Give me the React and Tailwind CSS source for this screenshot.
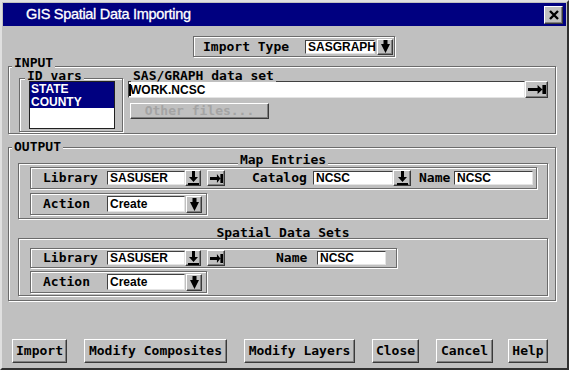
import React from 'react';

const monoBase = "font-['DejaVu_Sans_Mono',monospace] font-bold text-[13px]";
const mono = `${monoBase} text-black`;
const sans = "font-['Liberation_Sans',Arial,sans-serif] font-bold text-[12px]";
const raised = "border border-t-white border-l-white border-r-[#3a3a3a] border-b-[#3a3a3a] shadow-[inset_-1px_-1px_0_#808080] bg-[#c0c0c0]";
const sunken = "bg-white border border-t-[#404040] border-l-[#404040] border-r-[#e4e4e4] border-b-[#e4e4e4]";
const etched = "border border-[#6b6b6b] shadow-[inset_1px_1px_0_#fff,1px_1px_0_#fff]";

const DropIcon = () => (
    <svg width="9" height="13" viewBox="0 0 9 13">
        <path d="M2.5 0h4v4h2.5l-4.5 9L0 4h2.5z" fill="#000" />
    </svg>
);

const DownBar = () => (
    <svg width="11" height="14" viewBox="0 0 11 14">
        <path d="M4 0h3v6h3l-4.5 5L1 6h3z M0 12h11v2H0z" fill="#000" />
    </svg>
);

const ArrowBar = ({ w = 14 }) => (
    <svg width={w} height="9" viewBox="0 0 15 9" preserveAspectRatio="none">
        <path d="M0 3h8V0l4 4.5L8 9V6H0z M12 0h3v9h-3z" fill="#000" />
    </svg>
);

const Legend = ({ children, className }) => (
    <span className={`absolute bg-[#c0c0c0] px-[2px] h-[10px] leading-[10px] whitespace-nowrap ${mono} ${className}`}>
        {children}
    </span>
);

const Field = ({ value, w, h = 'h-[14px]' }) => (
    <div className={`${sunken} ${w} ${h} flex items-center pl-[2px] ${sans} text-black leading-none`}>{value}</div>
);

const IconBtn = ({ children, w = 'w-[16px]', h = 'h-[16px]', className = '' }) => (
    <div className={`${raised} ${w} ${h} flex items-center justify-center ${className}`}>{children}</div>
);

const ActionRow = ({ mt }) => (
    <div className={`${etched} ${mt} ml-[11px] w-[177px] h-[22px] flex items-center pl-[12px]`}>
        <span className={`${mono} w-[64px]`}>Action</span>
        <Field value="Create" w="w-[78px]" h="h-[16px]" />
        <IconBtn w="w-[16px]" h="h-[17px]" className="ml-[1px]">
            <DropIcon />
        </IconBtn>
    </div>
);

const LibPart = () => (
    <>
        <span className={`${mono} w-[64px]`}>Library</span>
        <Field value="SASUSER" w="w-[78px]" />
        <IconBtn>
            <DownBar />
        </IconBtn>
        <IconBtn w="w-[18px]" className="ml-[6px]">
            <ArrowBar w={13} />
        </IconBtn>
    </>
);

const App = () => {
    const buttons = [
        ['Import', 'w-[55px]', 'ml-[10px]'],
        ['Modify Composites', 'w-[143px]', 'ml-[17px]'],
        ['Modify Layers', 'w-[111px]', 'ml-[17px]'],
        ['Close', 'w-[47px]', 'ml-[17px]'],
        ['Cancel', 'w-[57px]', 'ml-[17px]'],
        ['Help', 'w-[40px]', 'ml-[15px]'],
    ];

    return (
        <div className="w-[569px] h-[370px] bg-[#c0c0c0] border-2 border-t-[#e0e0e0] border-l-[#e0e0e0] border-r-[#303030] border-b-[#303030] overflow-hidden">
            {/* title bar */}
            <div className="ml-[1px] mt-[1px] w-[563px] h-[23px] bg-[#000080] flex items-center">
                <span className="ml-[23px] text-white text-[14.5px] font-['Liberation_Sans',Arial,sans-serif] tracking-[-0.3px] [-webkit-text-stroke:0.3px_#fff]">
                    GIS Spatial Data Importing
                </span>
                <div className={`${raised} ml-auto mr-[3px] w-[19px] h-[18px] flex items-center justify-center`}>
                    <svg width="10" height="10" viewBox="0 0 10 10">
                        <path d="M1 1L9 9M9 1L1 9" stroke="#000" strokeWidth="2.4" />
                    </svg>
                </div>
            </div>

            {/* import type */}
            <div className={`${etched} mt-[10px] ml-[191px] w-[202px] h-[21px] flex items-center pl-[9px]`}>
                <span className={`${mono} w-[102px]`}>Import Type</span>
                <Field value="SASGRAPH" w="w-[70px]" h="h-[14px]" />
                <IconBtn w="w-[16px]" h="h-[16px]" className="ml-[2px]">
                    <DropIcon />
                </IconBtn>
            </div>

            {/* INPUT */}
            <div className={`${etched} relative mt-[9px] ml-[6px] w-[548px] h-[68px] flex items-start pt-[11px] pl-[10px]`}>
                <Legend className="-top-[9px] left-[3px]">INPUT</Legend>
                <div className={`${etched} relative w-[104px] h-[54px] pt-[2px] pl-[9px]`}>
                    <Legend className="-top-[8px] left-[5px] h-[9px] leading-[9px]">ID vars</Legend>
                    <div className="relative z-10 w-[86px] h-[48px] bg-white border border-[#202020]">
                        <div className={`h-[13px] bg-[#000080] pl-[1px] flex items-center leading-none ${sans} text-white`}>STATE</div>
                        <div className={`h-[13px] bg-[#000080] pl-[1px] flex items-center leading-none ${sans} text-white`}>COUNTY</div>
                    </div>
                </div>
                <div className="relative ml-[5px] mt-[3px]">
                    <Legend className="-top-[11px] left-[3px] h-[12px] leading-[12px]">SAS/GRAPH data set</Legend>
                    <div className="flex">
                        <div className={`${sunken} w-[397px] h-[17px] flex items-center ${sans} text-black leading-none`}>
                            <span className="border-l-2 border-black h-[12px] mr-[-1px]"></span>
                            WORK.NCSC
                        </div>
                        <IconBtn w="w-[23px]" h="h-[17px]">
                            <ArrowBar w={18} />
                        </IconBtn>
                    </div>
                    <div className={`${raised} ml-[2px] mt-[5px] w-[139px] h-[16px] flex items-center justify-center ${monoBase} text-[#a4a4a4]`}>
                        Other files...
                    </div>
                </div>
            </div>

            {/* OUTPUT */}
            <div className={`${etched} relative mt-[13px] ml-[6px] w-[548px] h-[154px] pt-[15px] pl-[9px]`}>
                <Legend className="-top-[6px] left-[3px]">OUTPUT</Legend>

                <div className={`${etched} relative w-[530px] h-[56px] pt-[3px]`}>
                    <Legend className="-top-[9px] left-1/2 -translate-x-1/2">Map Entries</Legend>
                    <div className={`${etched} ml-[11px] w-[507px] h-[22px] flex items-center pl-[12px]`}>
                        <LibPart />
                        <span className={`${mono} ml-[27px] w-[61px]`}>Catalog</span>
                        <Field value="NCSC" w="w-[80px]" />
                        <IconBtn w="w-[18px]">
                            <DownBar />
                        </IconBtn>
                        <span className={`${mono} ml-[8px] w-[35px]`}>Name</span>
                        <Field value="NCSC" w="w-[79px]" />
                    </div>
                    <ActionRow mt="mt-[4px]" />
                </div>

                <div className={`${etched} relative mt-[19px] w-[530px] h-[58px] pt-[9px]`}>
                    <Legend className="-top-[11px] left-1/2 -translate-x-1/2">Spatial Data Sets</Legend>
                    <div className={`${etched} ml-[11px] w-[367px] h-[20px] flex items-center pl-[12px]`}>
                        <LibPart />
                        <span className={`${mono} ml-[51px] w-[41px]`}>Name</span>
                        <Field value="NCSC" w="w-[69px]" />
                    </div>
                    <ActionRow mt="mt-[3px]" />
                </div>
            </div>

            {/* buttons */}
            <div className="mt-[38px] flex">
                {buttons.map(([label, w, ml]) => (
                    <div key={label} className={`${raised} ${w} ${ml} h-[24px] flex items-center justify-center ${mono}`}>
                        {label}
                    </div>
                ))}
            </div>
        </div>
    );
};

export default App;
